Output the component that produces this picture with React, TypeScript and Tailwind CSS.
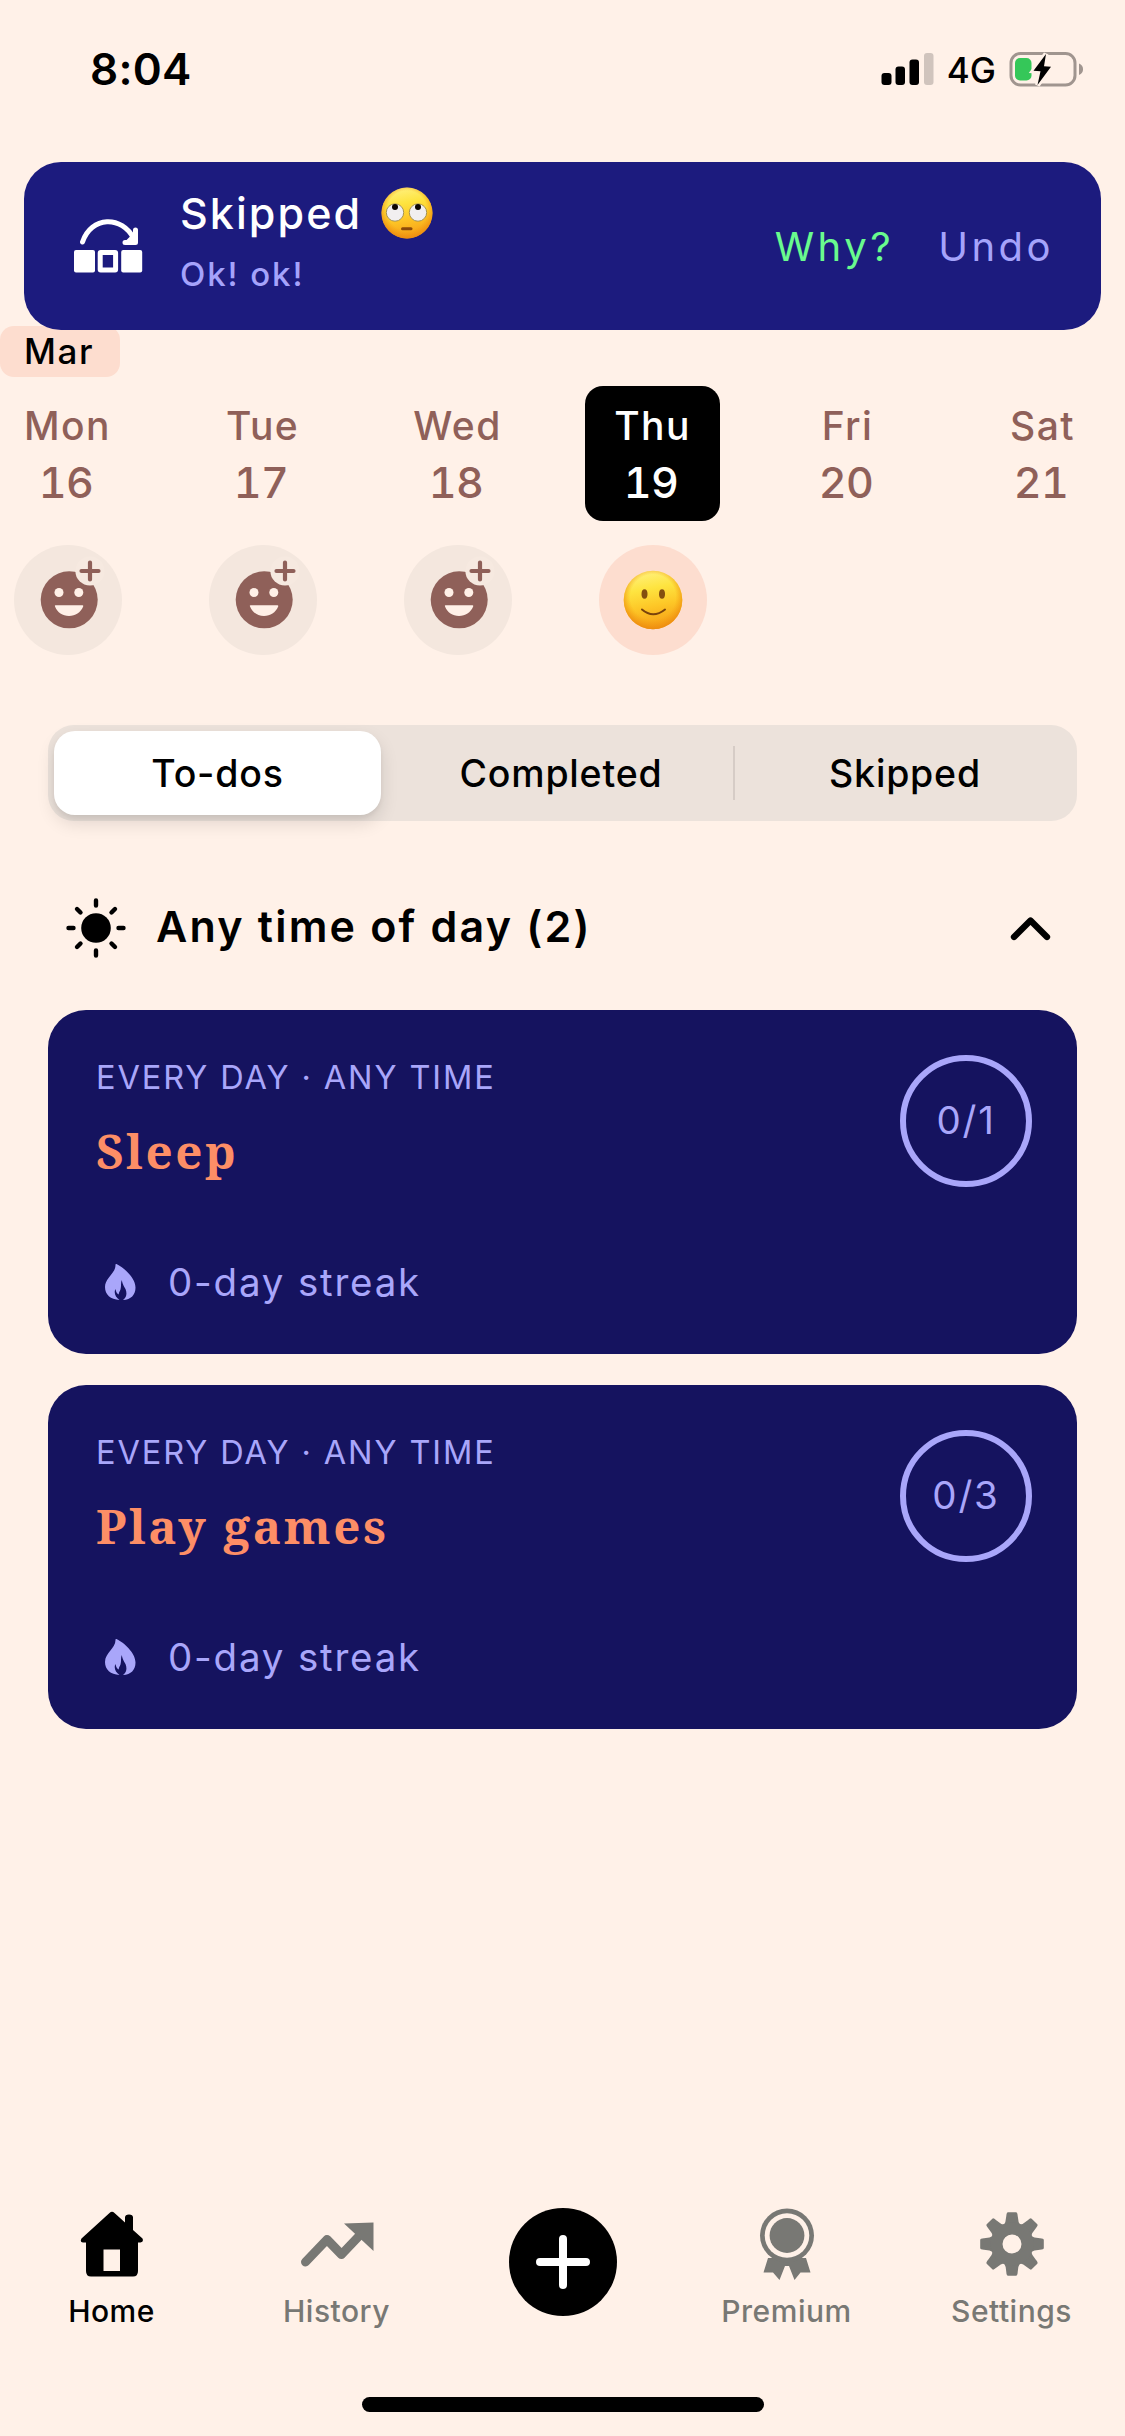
import React from "react";

const days = [
  { name: "Mon", date: "16", mood: "add" },
  { name: "Tue", date: "17", mood: "add" },
  { name: "Wed", date: "18", mood: "add" },
  { name: "Thu", date: "19", mood: "smile", selected: true },
  { name: "Fri", date: "20" },
  { name: "Sat", date: "21" },
];

function StatusBar() {
  return (
    <div className="flex h-[162px] items-start justify-between pt-[49px] pr-[41px] pl-[90px]">
      <div className="h-10 text-[44px] leading-10 font-semibold tracking-[0.26px]">8:04</div>
      <div className="flex h-10 items-center">
        <svg className="h-[34px] w-[54px]" viewBox="0 0 54 34">
          <rect x="0.5" y="21" width="10" height="12" rx="3" />
          <rect x="14.5" y="14.5" width="9.5" height="18.5" rx="3" />
          <rect x="28.5" y="7.5" width="9.5" height="25.5" rx="3" />
          <rect x="43" y="1" width="9.5" height="32" rx="3" fill="#d0c4bd" />
        </svg>
        <div className="ml-3 pt-0.5 text-[35px] leading-10 font-medium">4G</div>
        <svg className="ml-3 h-[38px] w-[76px]" viewBox="0 0 76 38">
          <rect x="3" y="3.5" width="64" height="31.5" rx="9.5" fill="none" stroke="#a0958f" strokeWidth="3" />
          <path d="M71 13.5 Q75 15 75 19.3 Q75 23.500 71 25 Z" fill="#a0958f" />
          <rect x="7" y="8" width="16.500" height="22.500" rx="5" fill="#35c759" />
          <path d="M38 4 L25.500 20.800 L32.500 21.300 L29.500 35 L43 16.800 L36 16.300 Z" fill="#fff1e8" stroke="#fff1e8" strokeWidth="5" />
          <path d="M38 4 L25.500 20.800 L32.500 21.300 L29.500 35 L43 16.800 L36 16.300 Z" />
        </svg>
      </div>
    </div>
  );
}

function SkipIcon() {
  return (
    <svg className="h-[54px] w-[72px]" viewBox="0 0 72 54" fill="none" stroke="#fff" strokeLinecap="round" strokeLinejoin="round">
      <path d="M8.500 23 C17 -3 48 -4 60 20" strokeWidth="5" />
      <path d="M61.500 11 V23.500 H51" strokeWidth="5" />
      <path d="M53 22 L60 22 L60 15 Z" fill="#fff" strokeWidth="2" />
      <rect x="0" y="31" width="21" height="22.500" rx="2" fill="#fff" stroke="none" />
      <rect x="47.200" y="31" width="21" height="22.500" rx="2" fill="#fff" stroke="none" />
      <rect x="26.200" y="33.500" width="15.400" height="17.500" rx="0.500" strokeWidth="5" />
    </svg>
  );
}

function EmojiGradients({ id }: { id: string }) {
  return (
    <defs>
      <linearGradient id={id} x1="0.400" y1="0" x2="0.600" y2="1">
        <stop offset="0" stopColor="#fff07c" />
        <stop offset="0.300" stopColor="#fee440" />
        <stop offset="0.600" stopColor="#fdc727" />
        <stop offset="1" stopColor="#f59a14" />
      </linearGradient>
      <radialGradient id={id + "-rim"} cx="0.500" cy="0.450" r="0.550">
        <stop offset="0.700" stopColor="#f39a10" stopOpacity="0" />
        <stop offset="1" stopColor="#ec8a10" stopOpacity="0.900" />
      </radialGradient>
    </defs>
  );
}

function EyeRollEmoji() {
  return (
    <svg className="h-[52px] w-[52px]" viewBox="0 0 52 52" role="img" aria-label="🙄">
      <EmojiGradients id="roll" />
      <circle cx="26" cy="26" r="25.500" fill="url(#roll)" />
      <circle cx="26" cy="26" r="25.500" fill="url(#roll-rim)" />
      <circle cx="14" cy="25.500" r="8.700" fill="#f1eff0" stroke="#9c8a4a" strokeWidth="0.900" />
      <circle cx="37" cy="25.500" r="8.700" fill="#f1eff0" stroke="#9c8a4a" strokeWidth="0.900" />
      <circle cx="14" cy="20" r="3" fill="#0c0602" />
      <circle cx="37" cy="20" r="3" fill="#0c0602" />
      <rect x="20" y="40.300" width="11.500" height="3" rx="1.500" fill="#8a4a0a" />
    </svg>
  );
}

function SmileEmoji() {
  return (
    <svg className="h-[60px] w-[60px]" viewBox="0 0 60 60" role="img" aria-label="🙂">
      <EmojiGradients id="smile" />
      <circle cx="30" cy="30" r="29.300" fill="url(#smile)" />
      <circle cx="30" cy="30" r="29.300" fill="url(#smile-rim)" />
      <ellipse cx="21.500" cy="24" rx="3" ry="4.800" fill="#845010" />
      <ellipse cx="39" cy="24" rx="3" ry="4.800" fill="#845010" />
      <path d="M19 39.500 Q30 49 42 39.500" fill="none" stroke="#7a430c" strokeWidth="2" strokeLinecap="round" />
    </svg>
  );
}

function AddMoodIcon() {
  return (
    <svg className="h-[110px] w-[108px]" viewBox="0.500 0 108 110">
      <circle cx="55.700" cy="54.800" r="28.500" fill="#8f6059" />
      <circle cx="45.500" cy="47.500" r="4.500" fill="#fff0e7" />
      <circle cx="65.300" cy="47.500" r="4.500" fill="#fff0e7" />
      <path d="M42 60.300 H69 Q70 60.300 69.700 61.500 C67 67.500 62 71 55.500 71 C49 71 44 67.500 41.500 61.500 Q41 60.300 42 60.300 Z" fill="#fff0e7" />
      <circle cx="76.500" cy="26" r="14.600" fill="#f6e9e0" />
      <path d="M76.500 17.500 V34.500 M68 26 H85" stroke="#8f6059" strokeWidth="4.200" strokeLinecap="round" />
    </svg>
  );
}

function SkippedBanner() {
  return (
    <div className="relative z-10 mx-6 flex h-[168px] items-center rounded-[37px] bg-[#1c1b7e] pr-[47px] pl-[50px] text-white">
      <SkipIcon />
      <div className="ml-[34px] flex h-full flex-1 flex-col pt-[23px]">
        <div className="flex h-14 items-center">
          <span className="text-[43px] leading-[56px] font-medium tracking-[2.070px]">Skipped</span>
          <span className="mt-[-1px] ml-[19px]"><EyeRollEmoji /></span>
        </div>
        <div className="mt-2.5 text-[33px] leading-[46px] font-medium tracking-[1.920px] text-[#a5a3fb]">Ok! ok!</div>
      </div>
      <div className="flex pt-px text-[40px] leading-[56px] font-[430] tracking-[3.500px]">
        <div className="text-[#69fb8e]">Why?</div>
        <div className="ml-[44px] text-[#a5a3fb]">Undo</div>
      </div>
    </div>
  );
}

function DayStrip() {
  return (
    <div className="ml-[-30px] flex w-[1170px]">
      {days.map((d) => (
        <div key={d.name} className="flex w-[195px] flex-col items-center">
          <div className={`flex h-[135px] w-[135px] flex-col items-center rounded-[18px] pt-3 ${d.selected ? "bg-black text-white" : "text-[#8f6059]"}`}>
            <div className="text-[39px] leading-[56px] font-medium tracking-[1.400px]">{d.name}</div>
            <div className="pr-[3px] text-[43px] leading-[56px] font-medium tracking-[-0.700px] tabular-nums">{d.date}</div>
          </div>
          {d.mood === "add" && (
            <div className="mt-6 h-[110px] w-[108px] rounded-[50%] bg-[#f4e7de]"><AddMoodIcon /></div>
          )}
          {d.mood === "smile" && (
            <div className="mt-6 flex h-[110px] w-[108px] items-center justify-center rounded-[50%] bg-[#fdddcf]"><SmileEmoji /></div>
          )}
        </div>
      ))}
    </div>
  );
}

function Segments() {
  return (
    <div className="mx-12 mt-[70px] flex h-24 items-center rounded-[26px] bg-[#ece2db] p-1.5 text-[37.500px] leading-[56px] font-[550] tracking-[0.800px]">
      <div className="flex h-[84px] w-[327px] items-center justify-center rounded-[21px] bg-white pt-px shadow-[0_8px_18px_rgba(0,0,0,0.12),0_3px_4px_rgba(0,0,0,0.05)]">To-dos</div>
      <div className="flex w-[352px] justify-center pt-px pl-[8px]">Completed</div>
      <div className="h-[54px] w-0.5 bg-[#d6ccc6]" />
      <div className="flex flex-1 justify-center pt-px pl-[4px]">Skipped</div>
    </div>
  );
}

function SectionHeader() {
  return (
    <div className="mt-[75px] mb-[50px] flex h-16 items-center pr-[72px] pl-[65px]">
      <svg className="h-[62px] w-[62px]" viewBox="-31 -31 62 62" stroke="#000" strokeWidth="4.400" strokeLinecap="round">
        <circle r="14.800" stroke="none" />
        <path d="M0 -27.500 V-22.500 M0 22.500 V27.500 M-27.500 0 H-22.500 M22.500 0 H27.500 M-19 -19 L-15.500 -15.500 M19 -19 L15.500 -15.500 M-19 19 L-15.500 15.500 M19 19 L15.500 15.500" />
      </svg>
      <div className="mt-[-5px] ml-[29px] flex-1 text-[43px] leading-[56px] font-[570] tracking-[2.200px]">Any time of day (2)</div>
      <svg className="h-[28px] w-[44px]" viewBox="0 0 44 28" fill="none" stroke="#000" strokeWidth="6.300" strokeLinecap="round" strokeLinejoin="round">
        <path d="M5 23 L21.500 6.500 L38 23" />
      </svg>
    </div>
  );
}

function Flame() {
  return (
    <svg className="h-[36px] w-[31px]" viewBox="0 0 31 36" fill="#a9a6fa">
      <path d="M11.500 0 C19 3.500 30.500 14 30.500 23.500 C30.500 31 26 35.500 18 36 C22 33 22 29 20.500 25 C19.500 23 17.500 20.500 16.700 16 C15.500 19.500 16.500 22 15.500 25.500 C14.500 28 14 28 13.700 30.500 C11.500 29.500 11 27.500 10.500 25 C8.500 28.500 10.500 33.500 14.500 36 C5.500 35.500 0 30.500 0 23 C0 14 10.500 9.500 10.500 1 Q10.500 -0.300 11.500 0 Z" />
    </svg>
  );
}

function HabitCard({ title, progress }: { title: string; progress: string }) {
  return (
    <div className="flex h-[344px] justify-between rounded-[38px] bg-[#15135f] pt-[45px] pr-[45px] pl-12 text-[#a9a6fa]">
      <div>
        <div className="text-[32.500px] leading-[45px] font-[430] tracking-[1.900px]">EVERY DAY · ANY TIME</div>
        <div className="mt-[19px] font-['Noto_Serif','Liberation_Serif',serif] text-[47.500px] leading-[64px] font-bold tracking-[2.600px] text-[#fd8e66]">{title}</div>
        <div className="mt-[71px] flex h-[56px] items-center pl-[9px]">
          <Flame />
          <span className="ml-[32px] text-[38.500px] leading-[56px] font-[430] tracking-[1.800px]">0-day streak</span>
        </div>
      </div>
      <div className="flex h-[132px] w-[132px] items-center justify-center rounded-full border-[6px] border-[#a9a6fa] text-[38.500px] font-[430] tracking-[1.800px]">{progress}</div>
    </div>
  );
}

function HomeIcon() {
  return (
    <svg className="h-[66px] w-[64px]" viewBox="0 0 64 66" fill="#000">
      <path fillRule="evenodd" d="M29.500 2 Q32 -0.500 34.500 2 L45 11.500 V6.500 Q45 3.500 49 3.500 Q53 3.500 53 6.500 V19 L62.500 27.500 Q64 31 60.500 31.500 H58 V60 Q58 65.500 53 65.500 H11 Q6 65.500 6 60 V31.500 H3 Q-0.500 31 1.500 27.500 Z M23.500 38.500 V60 H40 V38.500 Z" />
    </svg>
  );
}

function HistoryIcon() {
  return (
    <svg className="h-[50px] w-[76px]" viewBox="0 0 76 50">
      <path d="M6.500 43 L28 20.500 L42.500 35.500 L62 15" fill="none" stroke="#787874" strokeWidth="9" strokeLinecap="round" strokeLinejoin="round" />
      <path d="M45 4.500 L74.500 3.500 V32 Z" fill="#787874" />
    </svg>
  );
}

function PremiumIcon() {
  return (
    <svg className="h-[72px] w-[56px]" viewBox="0 0 56 72" fill="#787874">
      <path d="M9 50 L4.500 64.500 H14 L20.500 72 L26 58 H30 L35.500 72 L41.500 64.500 H51.500 L47 50 Z" />
      <circle cx="28" cy="27.500" r="27" />
      <circle cx="28" cy="27.500" r="22.300" fill="#fff1e8" />
      <circle cx="28" cy="27.500" r="17.400" />
    </svg>
  );
}

function GearIcon() {
  return (
    <svg className="h-[64px] w-[64px]" viewBox="-32 -32 64 64" fill="#787874">
      {[0, 45, 90, 135, 180, 225, 270, 315].map((angle) => (
        <path key={angle} transform={`rotate(${angle})`} d="M-8.500 -18 Q-6 -22 -5.700 -28 Q-5.500 -31.800 -4 -31.800 H4 Q5.500 -31.800 5.700 -28 Q6 -22 8.500 -18 Z" />
      ))}
      <circle r="15.500" fill="none" stroke="#787874" strokeWidth="12" />
    </svg>
  );
}

function Tab({ label, icon, active }: { label: string; icon: React.ReactNode; active?: boolean }) {
  return (
    <div className={`flex w-[225px] flex-col items-center pr-0.5 ${active ? "text-black" : "text-[#787874]"}`}>
      <div className="flex h-[72px] items-center justify-center">{icon}</div>
      <div className="mt-[11px] text-[30px] leading-[40px] font-medium tracking-[0.500px]">{label}</div>
    </div>
  );
}

export default function App() {
  return (
    <div className="flex h-[2436px] w-[1125px] flex-col overflow-hidden bg-[#fff1e8] font-['Inter','Liberation_Sans',sans-serif] text-black">
      <StatusBar />
      <SkippedBanner />
      <div className="mt-[-4px] mb-[9px] flex h-[51px] w-[120px] items-center rounded-[14px] bg-[#fdddcf] pl-[24px] text-[35px] font-medium tracking-[1.600px]">Mar</div>
      <DayStrip />
      <Segments />
      <SectionHeader />
      <div className="mx-12 flex flex-col gap-[31px]">
        <HabitCard title="Sleep" progress="0/1" />
        <HabitCard title="Play games" progress="0/3" />
      </div>
      <div className="mt-auto flex h-[189px] items-start">
        <Tab label="Home" active icon={<HomeIcon />} />
        <Tab label="History" icon={<HistoryIcon />} />
        <div className="flex w-[225px] justify-center">
          <div className="flex h-[108px] w-[108px] items-center justify-center rounded-full bg-black">
            <svg className="h-[54px] w-[54px]" viewBox="0 0 54 54" stroke="#fff" strokeWidth="8" strokeLinecap="round">
              <path d="M27 4 V50 M4 27 H50" />
            </svg>
          </div>
        </div>
        <Tab label="Premium" icon={<PremiumIcon />} />
        <Tab label="Settings" icon={<GearIcon />} />
      </div>
      <div className="mx-auto mb-6 h-[15px] w-[402px] rounded-full bg-black" />
    </div>
  );
}
